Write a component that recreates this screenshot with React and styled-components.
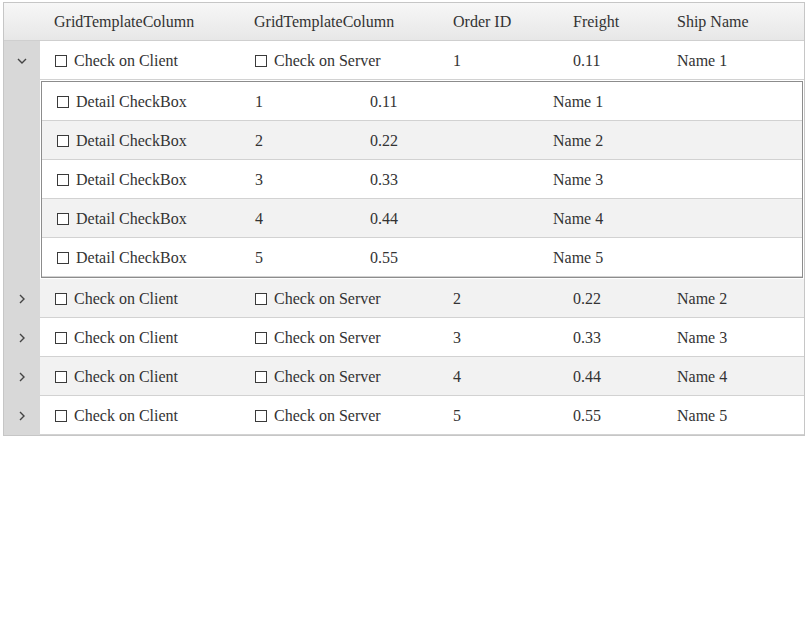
import React from "react";
import styled, { createGlobalStyle } from "styled-components";

const Global = createGlobalStyle`
  html, body { margin: 0; padding: 0; background: #fff; }
  body { font-family: "Liberation Serif", "Times New Roman", serif; }
`;

const Grid = styled.div`
  margin: 2px 0 0 3px;
  width: 802px;
  box-sizing: border-box;
  border: 1px solid #c6c6c6;
  color: #333;
  font-size: 16px;
`;

const HeaderRow = styled.div`
  display: grid;
  grid-template-columns: 36px 200px 199px 120px 104px 1fr;
  height: 37px;
  background: linear-gradient(#f7f7f7, #e7e7e7);
  border-bottom: 1px solid #cfcfcf;
`;

const HeaderCell = styled.div`
  display: flex;
  align-items: center;
  padding-left: 14px;
  white-space: nowrap;
`;

const Row = styled.div`
  display: flex;
`;

const ExpandCell = styled.div`
  width: 36px;
  flex: none;
  background: #d8d8d8;
  display: flex;
  align-items: center;
  justify-content: center;
  padding-top: 1px;
  box-sizing: border-box;
`;

const Cells = styled.div`
  flex: 1;
  display: grid;
  grid-template-columns: 200px 199px 120px 104px 1fr;
  height: 38px;
  border-bottom: 1px solid #d2d2d2;
  background: ${(p) => (p.$alt ? "#f2f2f2" : "#fff")};
`;

const Cell = styled.div`
  display: flex;
  align-items: center;
  padding: 1px 0 0 14px;
  white-space: nowrap;
`;

const Box = styled.span`
  display: inline-block;
  width: 12px;
  height: 12px;
  box-sizing: border-box;
  border: 1px solid #3a3a3a;
  margin: 0 7px 0 1px;
  background: #fff;
`;

const DetailWrap = styled.div`
  flex: 1;
  padding: 1px 1px 1px 1px;
  background: #fff;
`;

const DetailTable = styled.div`
  border: 1px solid #8c8c8c;
`;

const DetailRow = styled.div`
  display: grid;
  grid-template-columns: 199px 115px 183px 1fr;
  height: 38px;
  border-bottom: 1px solid #d2d2d2;
  background: ${(p) => (p.$alt ? "#f2f2f2" : "#fff")};
`;

const DetailCell = styled(Cell)``;

const Chevron = ({ down }) =>
  down ? (
    <svg width="10" height="6" viewBox="0 0 10 6">
      <path d="M1 1 L5 5 L9 1" fill="none" stroke="#444" strokeWidth="1.4" />
    </svg>
  ) : (
    <svg width="6" height="10" viewBox="0 0 6 10">
      <path d="M1 1 L5 5 L1 9" fill="none" stroke="#444" strokeWidth="1.4" />
    </svg>
  );

const rows = [1, 2, 3, 4, 5];
const fmt = (n) => (n * 0.11).toFixed(2);

export default function App() {
  return (
    <>
      <Global />
      <Grid>
        <HeaderRow>
          <div />
          <HeaderCell>GridTemplateColumn</HeaderCell>
          <HeaderCell>GridTemplateColumn</HeaderCell>
          <HeaderCell>Order ID</HeaderCell>
          <HeaderCell>Freight</HeaderCell>
          <HeaderCell>Ship Name</HeaderCell>
        </HeaderRow>
        {rows.map((n, i) => (
          <React.Fragment key={n}>
            <Row>
              <ExpandCell>
                <Chevron down={n === 1} />
              </ExpandCell>
              <Cells $alt={i % 2 === 1}>
                <Cell>
                  <Box />
                  Check on Client
                </Cell>
                <Cell>
                  <Box />
                  Check on Server
                </Cell>
                <Cell>{n}</Cell>
                <Cell>{fmt(n)}</Cell>
                <Cell>Name {n}</Cell>
              </Cells>
            </Row>
            {n === 1 && (
              <Row>
                <ExpandCell />
                <DetailWrap>
                  <DetailTable>
                    {rows.map((d, j) => (
                      <DetailRow key={d} $alt={j % 2 === 1}>
                        <DetailCell>
                          <Box />
                          Detail CheckBox
                        </DetailCell>
                        <DetailCell>{d}</DetailCell>
                        <DetailCell>{fmt(d)}</DetailCell>
                        <DetailCell>Name {d}</DetailCell>
                      </DetailRow>
                    ))}
                  </DetailTable>
                </DetailWrap>
              </Row>
            )}
          </React.Fragment>
        ))}
      </Grid>
    </>
  );
}
